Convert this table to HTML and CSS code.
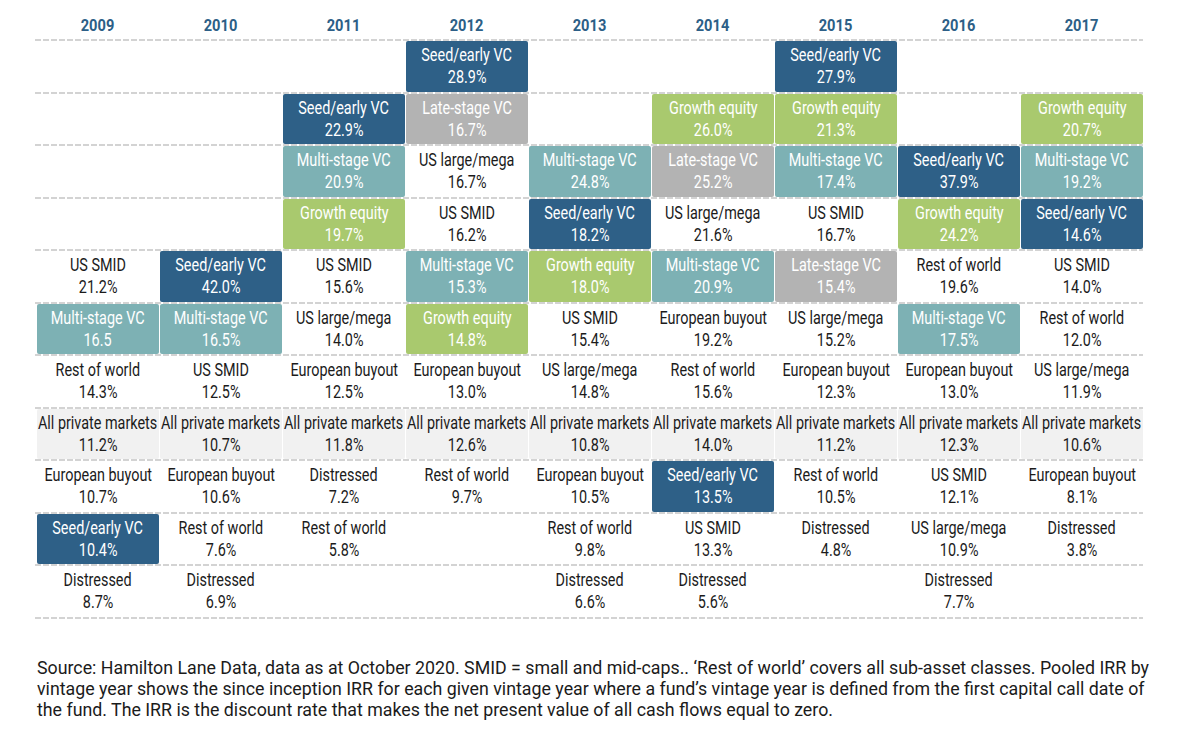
FILE: index.html
```html
<!DOCTYPE html>
<html lang="en">
<head>
<meta charset="utf-8">
<title>Pooled IRR by vintage year</title>
<link rel="stylesheet" href="styles.css">
</head>
<body>
<div class="chart">
  <div class="head">
    <div><span>2009</span></div><div><span>2010</span></div><div><span>2011</span></div><div><span>2012</span></div><div><span>2013</span></div><div><span>2014</span></div><div><span>2015</span></div><div><span>2016</span></div><div><span>2017</span></div>
  </div>
  <div class="row">
    <div class="cell"></div><div class="cell"></div><div class="cell"></div>
    <div class="cell blue"><span>Seed/early VC</span><span>28.9%</span></div>
    <div class="cell"></div><div class="cell"></div>
    <div class="cell blue"><span>Seed/early VC</span><span>27.9%</span></div>
    <div class="cell"></div><div class="cell"></div>
  </div>
  <div class="row">
    <div class="cell"></div><div class="cell"></div>
    <div class="cell blue"><span>Seed/early VC</span><span>22.9%</span></div>
    <div class="cell gray"><span>Late-stage VC</span><span>16.7%</span></div>
    <div class="cell"></div>
    <div class="cell green"><span>Growth equity</span><span>26.0%</span></div>
    <div class="cell green"><span>Growth equity</span><span>21.3%</span></div>
    <div class="cell"></div>
    <div class="cell green"><span>Growth equity</span><span>20.7%</span></div>
  </div>
  <div class="row">
    <div class="cell"></div><div class="cell"></div>
    <div class="cell teal"><span>Multi-stage VC</span><span>20.9%</span></div>
    <div class="cell"><span>US large/mega</span><span>16.7%</span></div>
    <div class="cell teal"><span>Multi-stage VC</span><span>24.8%</span></div>
    <div class="cell gray"><span>Late-stage VC</span><span>25.2%</span></div>
    <div class="cell teal"><span>Multi-stage VC</span><span>17.4%</span></div>
    <div class="cell blue"><span>Seed/early VC</span><span>37.9%</span></div>
    <div class="cell teal"><span>Multi-stage VC</span><span>19.2%</span></div>
  </div>
  <div class="row">
    <div class="cell"></div><div class="cell"></div>
    <div class="cell green"><span>Growth equity</span><span>19.7%</span></div>
    <div class="cell"><span>US SMID</span><span>16.2%</span></div>
    <div class="cell blue"><span>Seed/early VC</span><span>18.2%</span></div>
    <div class="cell"><span>US large/mega</span><span>21.6%</span></div>
    <div class="cell"><span>US SMID</span><span>16.7%</span></div>
    <div class="cell green"><span>Growth equity</span><span>24.2%</span></div>
    <div class="cell blue"><span>Seed/early VC</span><span>14.6%</span></div>
  </div>
  <div class="row">
    <div class="cell"><span>US SMID</span><span>21.2%</span></div>
    <div class="cell blue"><span>Seed/early VC</span><span>42.0%</span></div>
    <div class="cell"><span>US SMID</span><span>15.6%</span></div>
    <div class="cell teal"><span>Multi-stage VC</span><span>15.3%</span></div>
    <div class="cell green"><span>Growth equity</span><span>18.0%</span></div>
    <div class="cell teal"><span>Multi-stage VC</span><span>20.9%</span></div>
    <div class="cell gray"><span>Late-stage VC</span><span>15.4%</span></div>
    <div class="cell"><span>Rest of world</span><span>19.6%</span></div>
    <div class="cell"><span>US SMID</span><span>14.0%</span></div>
  </div>
  <div class="row">
    <div class="cell teal"><span>Multi-stage VC</span><span>16.5</span></div>
    <div class="cell teal"><span>Multi-stage VC</span><span>16.5%</span></div>
    <div class="cell"><span>US large/mega</span><span>14.0%</span></div>
    <div class="cell green"><span>Growth equity</span><span>14.8%</span></div>
    <div class="cell"><span>US SMID</span><span>15.4%</span></div>
    <div class="cell"><span>European buyout</span><span>19.2%</span></div>
    <div class="cell"><span>US large/mega</span><span>15.2%</span></div>
    <div class="cell teal"><span>Multi-stage VC</span><span>17.5%</span></div>
    <div class="cell"><span>Rest of world</span><span>12.0%</span></div>
  </div>
  <div class="row">
    <div class="cell"><span>Rest of world</span><span>14.3%</span></div>
    <div class="cell"><span>US SMID</span><span>12.5%</span></div>
    <div class="cell"><span>European buyout</span><span>12.5%</span></div>
    <div class="cell"><span>European buyout</span><span>13.0%</span></div>
    <div class="cell"><span>US large/mega</span><span>14.8%</span></div>
    <div class="cell"><span>Rest of world</span><span>15.6%</span></div>
    <div class="cell"><span>European buyout</span><span>12.3%</span></div>
    <div class="cell"><span>European buyout</span><span>13.0%</span></div>
    <div class="cell"><span>US large/mega</span><span>11.9%</span></div>
  </div>
  <div class="row">
    <div class="cell light"><span>All private markets</span><span>11.2%</span></div>
    <div class="cell light"><span>All private markets</span><span>10.7%</span></div>
    <div class="cell light"><span>All private markets</span><span>11.8%</span></div>
    <div class="cell light"><span>All private markets</span><span>12.6%</span></div>
    <div class="cell light"><span>All private markets</span><span>10.8%</span></div>
    <div class="cell light"><span>All private markets</span><span>14.0%</span></div>
    <div class="cell light"><span>All private markets</span><span>11.2%</span></div>
    <div class="cell light"><span>All private markets</span><span>12.3%</span></div>
    <div class="cell light"><span>All private markets</span><span>10.6%</span></div>
  </div>
  <div class="row">
    <div class="cell"><span>European buyout</span><span>10.7%</span></div>
    <div class="cell"><span>European buyout</span><span>10.6%</span></div>
    <div class="cell"><span>Distressed</span><span>7.2%</span></div>
    <div class="cell"><span>Rest of world</span><span>9.7%</span></div>
    <div class="cell"><span>European buyout</span><span>10.5%</span></div>
    <div class="cell blue"><span>Seed/early VC</span><span>13.5%</span></div>
    <div class="cell"><span>Rest of world</span><span>10.5%</span></div>
    <div class="cell"><span>US SMID</span><span>12.1%</span></div>
    <div class="cell"><span>European buyout</span><span>8.1%</span></div>
  </div>
  <div class="row">
    <div class="cell blue"><span>Seed/early VC</span><span>10.4%</span></div>
    <div class="cell"><span>Rest of world</span><span>7.6%</span></div>
    <div class="cell"><span>Rest of world</span><span>5.8%</span></div>
    <div class="cell"></div>
    <div class="cell"><span>Rest of world</span><span>9.8%</span></div>
    <div class="cell"><span>US SMID</span><span>13.3%</span></div>
    <div class="cell"><span>Distressed</span><span>4.8%</span></div>
    <div class="cell"><span>US large/mega</span><span>10.9%</span></div>
    <div class="cell"><span>Distressed</span><span>3.8%</span></div>
  </div>
  <div class="row">
    <div class="cell"><span>Distressed</span><span>8.7%</span></div>
    <div class="cell"><span>Distressed</span><span>6.9%</span></div>
    <div class="cell"></div><div class="cell"></div>
    <div class="cell"><span>Distressed</span><span>6.6%</span></div>
    <div class="cell"><span>Distressed</span><span>5.6%</span></div>
    <div class="cell"></div>
    <div class="cell"><span>Distressed</span><span>7.7%</span></div>
    <div class="cell"></div>
  </div>
  <div class="rule"></div>
</div>
<p class="note">Source: Hamilton Lane Data, data as at October 2020. SMID = small and mid-caps.. ‘Rest of world’ covers all sub-asset classes. Pooled IRR by vintage year shows the since inception IRR for each given vintage year where a fund’s vintage year is defined from the first capital call date of the fund. The IRR is the discount rate that makes the net present value of all cash flows equal to zero.</p>
</body>
</html>
```
FILE: styles.css
```css
html, body {
  margin: 0;
  padding: 0;
  background: #ffffff;
}

body {
  width: 1182px;
  height: 732px;
  overflow: hidden;
}

.chart {
  margin-left: 35px;
  width: 1108px;
  font-family: Roboto, "Liberation Sans", sans-serif;
}

.head {
  display: grid;
  grid-template-columns: repeat(9, 122px);
  column-gap: 1px;
  padding-left: 2px;
  height: 39px;
  box-sizing: border-box;
  padding-top: 14px;
}

.head div {
  display: flex;
  justify-content: center;
  font-weight: bold;
  font-size: 17px;
  line-height: 22px;
  color: #2d5f87;
}

.head span {
  display: inline-block;
  transform: scaleX(0.86);
}

.row,
.rule {
  background-image: repeating-linear-gradient(90deg, #d3d3d3 0 6px, transparent 6px 8px);
  background-size: 100% 2px;
  background-repeat: no-repeat;
  background-position: left top;
}

.row {
  display: grid;
  grid-template-columns: repeat(9, 122px);
  column-gap: 1px;
  padding-left: 2px;
  padding-top: 2px;
  height: 52.5px;
  box-sizing: border-box;
}

.rule {
  height: 2px;
}

.cell {
  display: flex;
  flex-direction: column;
  align-items: center;
  justify-content: center;
  font-size: 18px;
  line-height: 22px;
  color: #1b1b1b;
  white-space: nowrap;
  border-radius: 2px;
  overflow: visible;
}

.cell span {
  display: block;
  transform: scaleX(0.8);
}

.blue { background: #2e6087; color: #ffffff; }
.teal { background: #7db1b4; color: #ffffff; }
.green { background: #a9c96e; color: #ffffff; }
.gray { background: #b3b3b3; color: #ffffff; }
.light { background: #f1f1f1; }

.note {
  margin: 38px 0 0 37px;
  width: 1112px;
  font-family: Roboto, "Liberation Sans", sans-serif;
  font-size: 17.8px;
  line-height: 21.3px;
  color: #1b1b1b;
}
```
